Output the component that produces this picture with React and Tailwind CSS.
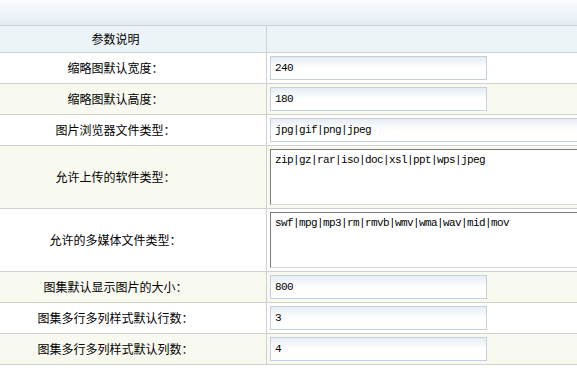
const rows = [
  { label: "缩略图默认宽度：", value: "240" },
  { label: "缩略图默认高度：", value: "180" },
  { label: "图片浏览器文件类型：", value: "jpg|gif|png|jpeg", wide: true },
  { label: "允许上传的软件类型：", value: "zip|gz|rar|iso|doc|xsl|ppt|wps|jpeg", area: true },
  { label: "允许的多媒体文件类型：", value: "swf|mpg|mp3|rm|rmvb|wmv|wma|wav|mid|mov", area: true },
  { label: "图集默认显示图片的大小：", value: "800" },
  { label: "图集多行多列样式默认行数：", value: "3" },
  { label: "图集多行多列样式默认列数：", value: "4" },
];

const cjk = { fontFamily: '"Noto Sans CJK SC", sans-serif' };
const mono = { fontFamily: '"Liberation Mono", monospace' };

function Field({ value, wide, area }) {
  if (area) {
    return (
      <textarea
        readOnly
        value={value}
        style={mono}
        className="block h-[56px] w-[420px] shrink-0 resize-none border border-t-[#7a7a7a] border-l-[#7a7a7a] border-b-[#d8d8d8] border-r-[#d8d8d8] bg-white px-[4px] py-[3px] text-[11px] leading-[14px] tracking-[-0.6px] text-black outline-none"
      />
    );
  }
  return (
    <input
      readOnly
      value={value}
      style={mono}
      className={`block h-[24px] shrink-0 ${wide ? "w-[420px]" : "w-[217px]"} border border-[#c2d1dd] bg-gradient-to-b from-[#e6edf3] via-white to-white px-[4px] text-[11px] tracking-[-0.6px] text-black outline-none`}
    />
  );
}

export default function App() {
  return (
    <div className="h-[368px] w-[577px] overflow-hidden bg-white">
      <div className="h-[26px] border-b border-[#c9cfd5] bg-gradient-to-b from-[#fbfdfe] to-[#e3edf5]" />
      <div className="ml-[-35px]">
        <div className="flex h-[27px] border-b border-[#cfd3d6] bg-[#edf4f8]">
          <div
            style={cjk}
            className="flex w-[302px] shrink-0 items-center justify-center border-r border-[#cfd3d6] text-[12px] text-black"
          >
            参数说明
          </div>
          <div className="min-w-0 flex-1" />
        </div>
        {rows.map((r, i) => (
          <div
            key={i}
            className={`flex border-b border-[#d0d0d0] ${r.area ? "h-[63px]" : "h-[31px]"} ${
              i % 2 === 1 ? "bg-[#f8f9ef]" : "bg-white"
            }`}
          >
            <div
              style={cjk}
              className="flex w-[302px] shrink-0 items-center justify-center border-r border-[#d0d0d0] text-[12px] text-black"
            >
              {r.label}
            </div>
            <div className="flex min-w-0 flex-1 items-center pl-[3px]">
              <Field {...r} />
            </div>
          </div>
        ))}
      </div>
    </div>
  );
}
